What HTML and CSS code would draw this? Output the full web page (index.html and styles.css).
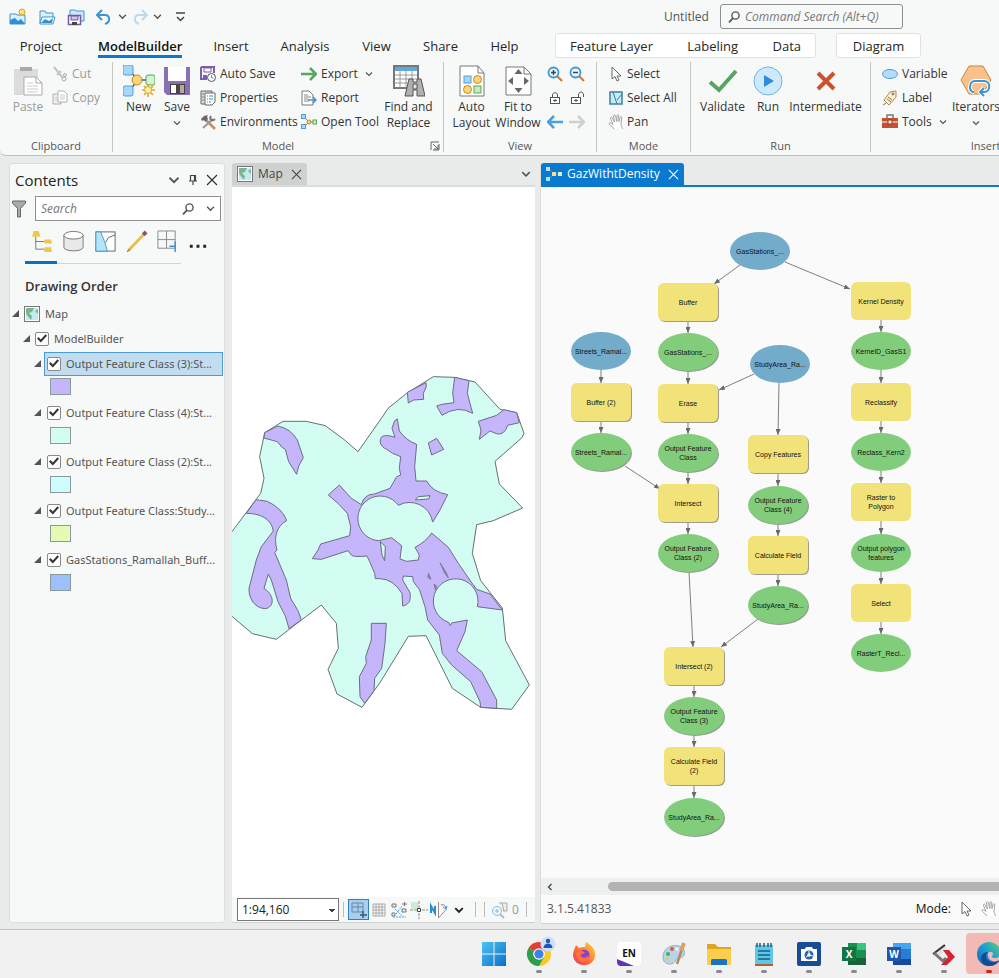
FILE: index.html
```html
<!DOCTYPE html>
<html lang="en">
<head>
  <meta charset="UTF-8">
  <meta name="viewport" content="width=device-width, initial-scale=1.0">
  <title>Untitled - ModelBuilder</title>
  <link rel="stylesheet" href="styles.css">
</head>
<body>

  <!-- shared icons -->
  <svg class="sprite" aria-hidden="true">
    <symbol id="chev" viewBox="0 0 8 8"><path d="M1 2.5l3 3 3-3" fill="none" stroke="#555" stroke-width="1.2"/></symbol>
    <symbol id="close" viewBox="0 0 12 12"><path d="M1 1l10 10M11 1L1 11" fill="none" stroke="currentColor" stroke-width="1.2"/></symbol>
    <symbol id="glass" viewBox="0 0 12 12"><circle cx="7.5" cy="4.5" r="3.6" fill="none" stroke="#555" stroke-width="1.4"/><path d="M5 7.2L1 11.3" stroke="#555" stroke-width="1.8"/></symbol>
    <symbol id="arrow" viewBox="0 0 16 16"><path d="M4 1v12l3-2.5L9 15l2-1-2-4h4z" fill="#fff" stroke="#666"/></symbol>
    <symbol id="hand" viewBox="0 0 16 16"><path d="M6 15C4 12 1 11 1 9.5 1 8.500 3 8.5 5 10.5L2.5 4.5C2 3 3.5 2.5 4.2 4L6.5 8 5.5 2C5.5.6 7.200.5 7.5 2L8.8 7.5 9 1.6C9.2.3 10.7.4 10.7 1.8L10.9 7.6 12.2 3.4C12.7 2.2 14 2.7 13.7 4L13 10C13 12 14 13 14.5 15" fill="#fff" stroke="#9a9a9a" stroke-width=".9"/></symbol>
    <symbol id="model" viewBox="0 0 16 16"><path d="M4 4l4 4-4 4M8 8h5" fill="none" stroke="#777"/><rect x=".5" y=".5" width="4" height="4" fill="#a6d8fb" stroke="#4e9fd8"/><rect x=".5" y="10.5" width="4" height="4" fill="#a6d8fb" stroke="#4e9fd8"/><circle cx="8" cy="8" r="2" fill="#fbd878" stroke="#b8892c"/><rect x="12" y="6" width="3.5" height="4" fill="#c9efc6" stroke="#5aa457"/></symbol>
    <symbol id="model-light" viewBox="0 0 16 16"><path d="M4 4l4 4-4 4M8 8h5" fill="none" stroke="#5b8fb8"/><rect x="0" y="1" width="4" height="4" fill="#b9e2fb"/><rect x="0" y="11" width="4" height="4" fill="#b9e2fb"/><rect x="6" y="6" width="4" height="4" fill="#fbdf8c"/><rect x="12" y="6" width="4" height="4" fill="#d9f2c4"/></symbol>
    <symbol id="mapicon" viewBox="0 0 16 16"><rect x=".5" y=".5" width="15" height="15" fill="#fff" stroke="#777"/><rect x="2" y="2" width="12" height="12" fill="#c5e9ef"/><path d="M2 2h8l-2 4-3 1 3 3-1 4-4-5-1-2zM14 3v5l-3-3z" fill="#7cb390"/></symbol>
  </svg>

  <header class="ribbon">
    <div class="title-row">
      <div class="quick">
        <button aria-label="New project"><svg viewBox="0 0 18 18"><path d="M1 6h6l1 1h8v9H1z" fill="#d9effc" stroke="#3f95d0"/><path d="M1 16v-4l5-2 3 3 3-2 4 5z" fill="#2e8fd3"/><circle cx="13" cy="4" r="3" fill="#fbe27a" stroke="#d6a82d"/></svg></button>
        <button aria-label="Open project"><svg viewBox="0 0 18 18"><path d="M2 16V3h5l1 2h7v4" fill="#d9effc" stroke="#3f95d0"/><path d="M2 16l2-7h13l-2 7z" fill="#fff" stroke="#3f95d0"/><path d="M3 15l4-4 4 2 4-3-1 5z" fill="#2e8fd3"/></svg></button>
        <button aria-label="Save project"><svg viewBox="0 0 18 18"><path d="M3 8V2h5l1 1h8v10h-3" fill="#cde8f8" stroke="#3f95d0"/><rect x="1.5" y="7.5" width="12" height="9" fill="#fff" stroke="#77579f" stroke-width="1.5"/><path d="M4 8h7v4H4z" fill="#cfc4df" stroke="#77579f"/><path d="M5 14h5v3H5z" fill="#444"/></svg></button>
        <button aria-label="Undo"><svg viewBox="0 0 18 18"><path d="M6 2L1 7l5 5M1 7h8c5 0 6 7 0 9" fill="none" stroke="#3c93d4" stroke-width="2"/></svg></button>
        <button class="tiny" aria-label="Undo list"><svg viewBox="0 0 8 8"><use href="#chev"/></svg></button>
        <button aria-label="Redo"><svg viewBox="0 0 18 18"><path d="M11 2l5 5-5 5M16 7H8c-5 0-6 7 0 9" fill="none" stroke="#c0d9ea" stroke-width="2"/></svg></button>
        <button class="tiny" aria-label="Redo list"><svg viewBox="0 0 8 8"><use href="#chev"/></svg></button>
        <button class="custom" aria-label="Customize"><svg viewBox="0 0 18 18"><path d="M4 5h9M5 9l3.5 3.5L12 9" fill="none" stroke="#444" stroke-width="1.5"/></svg></button>
      </div>
      <span class="doc-name">Untitled</span>
      <label class="command"><svg viewBox="0 0 12 12"><use href="#glass"/></svg><input type="text" placeholder="Command Search (Alt+Q)" aria-label="Command Search"></label>
    </div>

    <nav class="tabs">
      <button class="tab project">Project</button>
      <button class="tab builder active">ModelBuilder</button>
      <button class="tab insert">Insert</button>
      <button class="tab analysis">Analysis</button>
      <button class="tab view-menu">View</button>
      <button class="tab share">Share</button>
      <button class="tab help">Help</button>
      <div class="context layer-tabs">
        <button class="tab">Feature Layer</button>
        <button class="tab">Labeling</button>
        <button class="tab">Data</button>
      </div>
      <div class="context diagram-tab">
        <button class="tab">Diagram</button>
      </div>
    </nav>

    <div class="groups">
      <section class="group clipboard">
        <div class="tools">
          <button class="big paste" disabled><svg viewBox="0 0 32 32"><path d="M2 4h24v26H2z" fill="#dcdcdc"/><path d="M8 2h12v4H8z" fill="#aaa"/><path d="M12 12h12l6 6v12H12z" fill="#fff" stroke="#aaa"/><path d="M24 12v6h6" fill="none" stroke="#aaa"/><path d="M15 18h6M15 21h11M15 24h11M15 27h11" stroke="#ccc"/></svg>Paste</button>
          <div class="stack">
            <button class="small" disabled><svg viewBox="0 0 16 16"><path d="M2 1l9 11M9 5L5 9" stroke="#c4c4c4" stroke-width="2"/><circle cx="12" cy="13" r="2" fill="none" stroke="#aaa"/><circle cx="13" cy="9" r="1.5" fill="none" stroke="#aaa"/></svg>Cut</button>
            <button class="small" disabled><svg viewBox="0 0 16 16"><path d="M1 4h8v10H1z" fill="#eee" stroke="#b0b0b0"/><path d="M6 1h6l3 3v8H6z" fill="#fff" stroke="#b0b0b0"/><path d="M8 5h5M8 7h5M8 9h5M3 8h2M3 10h2" stroke="#ccc"/></svg>Copy</button>
          </div>
        </div>
        <h2>Clipboard</h2>
      </section>

      <section class="group model-group">
        <div class="tools">
          <button class="big new"><svg viewBox="0 0 32 32"><path d="M6 5l9 10-9 11M15 15h12" fill="none" stroke="#555" stroke-width="1.5"/><rect x="0" y="0" width="10" height="10" rx="2" fill="#a6d6fa" stroke="#4d9fdb"/><rect x="0" y="21" width="10" height="10" rx="2" fill="#a6d6fa" stroke="#4d9fdb"/><circle cx="14" cy="15" r="5" fill="#fbd577" stroke="#b98b2b"/><rect x="23" y="10" width="9" height="10" rx="2" fill="#d3f3d1" stroke="#5aa457"/><path d="M25 19v13M19 25h13M21 21l9 9M30 21l-9 9" stroke="#d9a72c" stroke-width="1.5"/><circle cx="25" cy="25" r="3.5" fill="#fff0a0" stroke="#d9a72c"/></svg>New</button>
          <button class="big save"><svg viewBox="0 0 32 32"><path d="M3 2h26v28H6l-3-3z" fill="#8a6fb3"/><path d="M7 2h18v14H7z" fill="#fff"/><path d="M9 19h15v10H9z" fill="#444"/><path d="M10 20h5v8h-5z" fill="#fff"/><path d="M19 20h4v8h-4z" fill="#b5aa98"/></svg>Save<svg class="drop" viewBox="0 0 8 8"><use href="#chev"/></svg></button>
          <div class="stack saves">
            <button class="small"><svg viewBox="0 0 16 16"><path d="M1 1h13v6M1 1v12h6" fill="none" stroke="#7d5fa8" stroke-width="2"/><path d="M4 2h7v4H4z" fill="#fff" stroke="#7d5fa8"/><path d="M3 9h4v4H3z" fill="#7d5fa8"/><circle cx="11.5" cy="11.5" r="4" fill="#fff" stroke="#555"/><path d="M11.5 9v3h2" fill="none" stroke="#4a9bd8"/></svg>Auto Save</button>
            <button class="small"><svg viewBox="0 0 16 16"><path d="M1 1h11v13H1z" fill="#ddd" stroke="#666"/><path d="M5 3h10v9l-3 3H5z" fill="#fff" stroke="#666"/><path d="M7 6h1M9 6h4M7 9h1M9 9h4M7 12h1M9 12h2M2 4h2M2 7h2M2 10h2" stroke="#3f8ec6"/></svg>Properties</button>
            <button class="small"><svg viewBox="0 0 16 16"><path d="M6 6l9 9" stroke="#d08b54" stroke-width="2.5"/><path d="M1 5l3-3 4-1-1 2 1 2-3 3-1-2-2 1z" fill="#666"/><path d="M3 14L13 5" stroke="#999" stroke-width="2"/><path d="M11 2c-2 3 1 6 4 3" fill="none" stroke="#777" stroke-width="2"/></svg>Environments</button>
          </div>
          <div class="stack exports">
            <button class="small"><svg viewBox="0 0 16 16"><path d="M0 8h14M9 2l6 6-6 6" fill="none" stroke="#57a565" stroke-width="2.6"/></svg>Export<svg class="side-drop" viewBox="0 0 8 8"><use href="#chev"/></svg></button>
            <button class="small"><svg viewBox="0 0 16 16"><path d="M1 1h7l4 4v10H1z" fill="#fff" stroke="#777"/><path d="M3 5h4M3 7h7M3 9h4M3 11h5" stroke="#888"/><path d="M7 10h8M12 7l3 3-3 3" fill="none" stroke="#3f94d3" stroke-width="1.5"/></svg>Report</button>
            <button class="small"><svg viewBox="0 0 16 16"><use href="#model"/></svg>Open Tool</button>
          </div>
          <button class="big find"><svg viewBox="0 0 32 32"><path d="M1 1h24v22H1z" fill="#fff" stroke="#777" stroke-width="2"/><path d="M2 2h22v4H2z" fill="#5fa9dd"/><path d="M2 10h22M2 14h22M2 18h22M7 6v17M13 6v17M19 6v17" stroke="#999"/><path d="M16 14h4v3h4v-3h4l4 17h-8v-6h-4v6h-8z" fill="#b0b0b0" stroke="#555"/><path d="M20 19h4v5h-4z" fill="#e4e4e4" stroke="#555"/></svg>Find and<br>Replace</button>
        </div>
        <h2>Model</h2>
        <button class="launcher" aria-label="Model options"><svg viewBox="0 0 10 10"><path d="M1 9V1h8M3 3l5 5M8 4v4H4M9 3v6H3" fill="none" stroke="#666"/></svg></button>
      </section>

      <section class="group view-group">
        <div class="tools">
          <button class="big auto"><svg viewBox="0 0 32 32"><path d="M4 1h18l6 7v23H4z" fill="#fff" stroke="#777"/><path d="M22 1v7h6" fill="none" stroke="#777"/><rect x="8" y="11" width="7" height="7" fill="#a6d6fa" stroke="#4d9fdb"/><circle cx="21.5" cy="14.5" r="4" fill="#fbd577" stroke="#b98b2b"/><circle cx="11.5" cy="24.5" r="4" fill="#fbd577" stroke="#b98b2b"/><rect x="18" y="21" width="7" height="7" fill="#c3ecc0" stroke="#5aa457"/></svg>Auto<br>Layout</button>
          <button class="big fit"><svg viewBox="0 0 32 32"><path d="M4 2h18l7 7v21H4z" fill="#fff" stroke="#777"/><path d="M22 2v7h7" fill="none" stroke="#777"/><path d="M16.5 4l4 5h-8zM16.5 28l4-5h-8zM6 16l5-4v8zM27 16l-5-4v8z" fill="#666"/></svg>Fit to<br>Window</button>
          <div class="nav-grid">
            <button aria-label="Zoom in"><svg viewBox="0 0 16 16"><path d="M10 10l5 5" stroke="#c9803f" stroke-width="2.2"/><circle cx="6.5" cy="6.5" r="5" fill="#eaf6fd" stroke="#4196d5" stroke-width="1.8"/><path d="M4 6.5h5M6.5 4v5" stroke="#444" stroke-width="1.5"/></svg></button>
            <button aria-label="Zoom out"><svg viewBox="0 0 16 16"><path d="M10 10l5 5" stroke="#c9803f" stroke-width="2.2"/><circle cx="6.5" cy="6.5" r="5" fill="#eaf6fd" stroke="#4196d5" stroke-width="1.8"/><path d="M4 6.5h5" stroke="#444" stroke-width="1.5"/></svg></button>
            <button aria-label="Lock"><svg viewBox="0 0 16 16"><rect x="3.5" y="7.5" width="9" height="6" fill="#fff" stroke="#555"/><path d="M5.5 7V5c0-3 5-3 5 0v2M8 9v3M6 10.5h4" fill="none" stroke="#555"/></svg></button>
            <button aria-label="Unlock"><svg viewBox="0 0 16 16"><rect x="2.5" y="7.5" width="9" height="6" fill="#fff" stroke="#555"/><path d="M9.5 7V5c0-4 5-4 5 0v2M7 9v3M5 10.5h4" fill="none" stroke="#555"/></svg></button>
            <button aria-label="Back"><svg viewBox="0 0 16 16"><path d="M16 8H2M7 2L1 8l6 6" fill="none" stroke="#4a9fdc" stroke-width="2.6"/></svg></button>
            <button aria-label="Forward"><svg viewBox="0 0 16 16"><path d="M0 8h14M9 2l6 6-6 6" fill="none" stroke="#cfcfcf" stroke-width="2.6"/></svg></button>
          </div>
        </div>
        <h2>View</h2>
      </section>

      <section class="group mode-group">
        <div class="tools">
          <div class="stack">
            <button class="small"><svg viewBox="0 0 16 16"><use href="#arrow"/></svg>Select</button>
            <button class="small"><svg viewBox="0 0 16 16"><rect x="2" y="2" width="12" height="12" fill="#c5ecf6" stroke="#3e7f9e" stroke-width="1.5"/><path d="M5 2l4 12M9 10l5-6" fill="none" stroke="#3e7f9e"/></svg>Select All</button>
            <button class="small"><svg viewBox="0 0 16 16"><use href="#hand"/></svg>Pan</button>
          </div>
        </div>
        <h2>Mode</h2>
      </section>

      <section class="group run-group">
        <div class="tools">
          <button class="big validate"><svg viewBox="0 0 32 32"><path d="M3 17l9 8L29 6" fill="none" stroke="#57a565" stroke-width="4"/></svg>Validate</button>
          <button class="big run"><svg viewBox="0 0 32 32"><circle cx="16" cy="16" r="14" fill="#cfe9fc" stroke="#6db3e6"/><path d="M12 10l10 6-10 6z" fill="#2f8cd6"/></svg>Run</button>
          <button class="big inter"><svg viewBox="0 0 32 32"><path d="M8 8l16 16M24 8L8 24" stroke="#c9532f" stroke-width="4"/></svg>Intermediate</button>
        </div>
        <h2>Run</h2>
      </section>

      <section class="group insert-group">
        <div class="tools">
          <div class="stack">
            <button class="small"><svg viewBox="0 0 16 16"><ellipse cx="8" cy="8" rx="7.5" ry="4.5" fill="#b5dcf9" stroke="#4d9fdb"/></svg>Variable</button>
            <button class="small"><svg viewBox="0 0 16 16"><path d="M2 10L8 2l6-1v6l-7 8z" fill="#fdf0d0" stroke="#b58a4c"/><circle cx="11" cy="4" r="1" fill="#fff" stroke="#666"/><path d="M5 9l4 3M6 7l4 3M1 15l3-2" stroke="#777"/></svg>Label</button>
            <button class="small"><svg viewBox="0 0 16 16"><path d="M5 4V1h6v3" fill="none" stroke="#777" stroke-width="1.5"/><path d="M0 4h16v10H0z" fill="#c6502f"/><path d="M0 8h16" stroke="#fff"/><path d="M6 6h4v4H6z" fill="#eee" stroke="#8a3a22"/></svg>Tools<svg class="side-drop" viewBox="0 0 8 8"><use href="#chev"/></svg></button>
          </div>
          <button class="big iter"><svg viewBox="0 0 32 32"><path d="M9 1h14l8 14-8 14H9L1 15z" fill="#fac28a" stroke="#c9853f"/><path d="M14 27c-6 0-5-11 1-11h9c7 0 7 11 0 11h-3M24 23l-4 4 4 4" fill="none" stroke="#fff" stroke-width="4"/><path d="M14 27c-6 0-5-11 1-11h9c7 0 7 11 0 11h-3M24 23l-4 4 4 4" fill="none" stroke="#3a92d8" stroke-width="2"/></svg>Iterators<svg class="drop" viewBox="0 0 8 8"><use href="#chev"/></svg></button>
        </div>
        <h2>Insert</h2>
      </section>
    </div>
  </header>

  <main class="workspace">
    <aside class="contents">
      <div class="pane-head">
        <h1>Contents</h1>
        <button aria-label="Menu"><svg viewBox="0 0 8 8"><use href="#chev"/></svg></button>
        <button aria-label="Pin"><svg viewBox="0 0 12 12"><path d="M3.5 7V1.5h5V7M2 7h8M6 7v4M7.5 2v5" fill="none" stroke="#444" stroke-width="1.2"/></svg></button>
        <button aria-label="Close"><svg viewBox="0 0 12 12"><use href="#close"/></svg></button>
      </div>
      <div class="search-row">
        <svg viewBox="0 0 14 18"><path d="M.5 1h13v2L8.5 8.5V17h-3V8.5L.5 3z" fill="#aaa" stroke="#666"/></svg>
        <label class="search"><input type="text" placeholder="Search" aria-label="Search contents"><svg viewBox="0 0 12 12"><use href="#glass"/></svg><svg class="chev" viewBox="0 0 8 8"><use href="#chev"/></svg></label>
      </div>
      <div class="list-tabs">
        <button class="active" aria-label="List by drawing order"><svg viewBox="0 0 24 24"><path d="M6 7v13h9M6 12h9" fill="none" stroke="#777"/><path d="M4 1h5l2 6H2zM15 10h7l1 4h-8zM15 18h7l1 5h-8z" fill="#ecc94b"/></svg></button>
        <button aria-label="List by source"><svg viewBox="0 0 24 24"><path d="M2 5v13c0 5 20 5 20 0V5" fill="#e9e9e9" stroke="#777"/><ellipse cx="12" cy="5.5" rx="10" ry="4" fill="#fff" stroke="#777"/></svg></button>
        <button aria-label="List by selection"><svg viewBox="0 0 24 24"><rect x="2" y="2" width="20" height="20" fill="#fff" stroke="#666"/><path d="M2 2h5l4 10 3 10H2z" fill="#b4e5f7" stroke="#4a9cc4"/><path d="M12 13l3-5 7-3" fill="none" stroke="#666"/></svg></button>
        <button aria-label="List by editing"><svg viewBox="0 0 24 24"><path d="M2 22L20 3" stroke="#e5be4c" stroke-width="3"/><path d="M18 5l3-3" stroke="#8d5555" stroke-width="4"/><path d="M1 23l3-3" stroke="#8a6a2a"/></svg></button>
        <button class="snap" aria-label="List by snapping"><svg viewBox="0 0 24 24"><path d="M2 1h18v18H2zM11 1v18M2 10h18" fill="none" stroke="#888"/><path d="M14 17h6M20 12v11" stroke="#3a92d0" stroke-width="1.5"/></svg></button>
        <button class="more" aria-label="More"><svg viewBox="0 0 24 24"><path d="M4 17h3M11 17h3M18 17h3" stroke="#222" stroke-width="3"/></svg></button>
      </div>
      <h3>Drawing Order</h3>
      <ul class="tree">
        <li class="row map-row"><i></i><svg viewBox="0 0 16 16"><use href="#mapicon"/></svg>Map</li>
        <li class="row group-row"><i></i><label><input type="checkbox" checked>ModelBuilder</label></li>
        <li class="row layer selected"><i></i><label><input type="checkbox" checked>Output Feature Class (3):St...</label></li>
        <li class="swatch violet"></li>
        <li class="row layer"><i></i><label><input type="checkbox" checked>Output Feature Class (4):St...</label></li>
        <li class="swatch mint"></li>
        <li class="row layer"><i></i><label><input type="checkbox" checked>Output Feature Class (2):St...</label></li>
        <li class="swatch aqua"></li>
        <li class="row layer"><i></i><label><input type="checkbox" checked>Output Feature Class:Study...</label></li>
        <li class="swatch lime"></li>
        <li class="row layer"><i></i><label><input type="checkbox" checked>GasStations_Ramallah_Buff...</label></li>
        <li class="swatch blue"></li>
      </ul>
    </aside>

    <section class="view map-view">
      <div class="view-tabs">
        <button class="view-tab"><svg viewBox="0 0 16 16"><use href="#mapicon"/></svg>Map<svg class="x" viewBox="0 0 12 12"><use href="#close"/></svg></button>
        <button class="view-list" aria-label="View list"><svg viewBox="0 0 8 8"><use href="#chev"/></svg></button>
      </div>
      <svg class="map" viewBox="12 -519 909 2127" preserveAspectRatio="xMidYMin" role="img" aria-label="Study area map">
        <path class="area" d="M0 531L12 515L98 400L108 355L95 290L110 218L165 184L235 184L292 197L350 240L390 275L465 168L480 145L536 100L616 50L678 52L741 66L816 148L866 158L888 220L882 233L801 304L814 372L884 444L796 482L746 494L733 580L758 662L823 744L833 842L904 975L851 1048L758 1042L673 985L594 827L541 829L456 968L402 1042L327 1002L300 928L331 865L325 790L280 735L220 780L145 838L73 821L12 769L0 758z"/>
        <path class="zone" d="M110 218L150 198Q188 206 208 240L226 293L212 318L206 343L182 305L172 268L162 262L148 245L108 234z"/>
        <path class="zone" d="M55 460L84 419L118 424Q164 446 176 482C146 498 136 530 147 570L140 577L175 660L188 715L210 752L220 780L183 806L172 768L150 725L130 660L121 642L108 685C140 705 140 742 112 746C80 745 62 715 63 685L85 600L100 560L136 513C130 475 95 460 55 460z"/>
        <path class="zone" d="M301 405L334 375L370 415L400 434Q408 402 440 402L456 396L486 385L506 350L518 345L514 325L518 290L494 280L476 268C450 258 452 228 470 227L484 227L501 232L492 205L500 182L508 177L514 213Q535 242 566 253L560 320L564 363L596 363Q612 395 659 404L636 450L614 486A70 70 0 0 0 511 436A67 67 0 1 0 452 542L491 533L521 557L516 597L536 604L571 600L574 585L561 562Q594 545 611 519L661 562L691 610L731 668L746 688L786 702L823 750L748 740A67 67 0 1 0 662 787L667 797L671 789L718 780L711 815L686 872L761 935L806 1020L806 1045L758 1042L756 1025L728 965L671 915L643 880L634 825L599 780L591 740L574 688L556 665L554 650L526 648L524 660L546 698C550 725 540 735 524 738L522 700Q495 657 456 656L442 656L440 640L425 605L417 588Q376 592 370 585L360 572L280 598L253 596L270 570L278 552L365 527L368 500L358 460L330 430z"/>
        <path class="zone" d="M538 97L594 68L595 80L586 100L587 118L557 120L541 129z"/>
        <path class="zone" d="M680 52L723 62L718 100L734 160Q690 134 642 166L626 138L641 133L678 128L674 100z"/>
        <path class="zone" d="M751 184L806 166L828 149L866 158L874 188L839 196Q830 225 808 222L786 213L754 238L759 210z"/>
        <path class="zone" d="M601 249L626 235L647 268L611 285z"/>
        <path class="zone" d="M430 790L475 790L471 850L461 925L440 955L438 992L410 1030L396 1010L394 950L415 910L413 890L430 840z"/>
        <path class="area" d="M562 420L571 410L606 407L602 417zM457 545L472 560L470 602L462 585z"/>
        <path class="hole" d="M636 608L656 640L661 654L650 640zM599 652L602 640L609 658zM618 672L626 678L622 690z"/>
      </svg>
      <div class="status">
        <select aria-label="Map scale"><option>1:94,160</option></select>
        <span class="bar"></span>
        <button class="on" aria-label="Layout grid"><svg viewBox="0 0 18 18"><path d="M2 2h11v9H2zM2 6h11M8 2v9" fill="none" stroke="#6d8598"/><path d="M13 10v7M10 14h7" stroke="#456" stroke-width="1.5"/></svg></button>
        <button aria-label="Grid"><svg viewBox="0 0 18 18"><path d="M3 3h12v12H3zM3 6h12M3 9h12M3 12h12M6 3v12M9 3v12M12 3v12" fill="none" stroke="#aaa"/></svg></button>
        <button aria-label="Snapping"><svg viewBox="0 0 18 18"><path d="M2 3h4v3H2zM12 8h4v3h-4zM2 12h3v3H2z" fill="#eee" stroke="#777"/><path d="M6 13l6-8M5 8l7 7M3 16h13" stroke="#4a9cd8" stroke-dasharray="2 1"/><path d="M12 3h5M14.5 1v4" stroke="#777"/></svg></button>
        <button aria-label="Dynamic constraints"><svg viewBox="0 0 18 18"><path d="M1 1h7v7H1z" fill="#cdebd0"/><path d="M0 9h18M9 0v18" stroke="#888" stroke-dasharray="3 1"/><path d="M7.5 7.5h3v3h-3z" fill="#fff" stroke="#444"/></svg></button>
        <button aria-label="North up"><svg viewBox="0 0 18 18"><path d="M1 12V5l4 7V5" fill="none" stroke="#2d8dd2" stroke-width="2"/><path d="M8.5 1v16l8-9" fill="none" stroke="#a88"/><path d="M11 4c3-1 5 1 5 4M13 6l3 2 1-3" fill="none" stroke="#3a92d8"/></svg></button>
        <button class="more" aria-label="More"><svg viewBox="0 0 8 8"><path d="M1 2.5l3 3 3-3" fill="none" stroke="#222" stroke-width="1.6"/></svg></button>
        <span class="bar double"></span>
        <svg class="selected-icon" viewBox="0 0 18 18"><path d="M8 2h8v8h-4M11 2l2 8" fill="#eee" stroke="#aaa"/><circle cx="6" cy="10" r="4.5" fill="#eef7fc" stroke="#8abbe0"/><path d="M4 10h4M6 8v4" stroke="#8abbe0"/><path d="M9 13l4 4" stroke="#bbb" stroke-width="2"/></svg>
        <span class="count">0</span>
        <span class="bar"></span>
      </div>
    </section>

    <section class="view model-view">
      <div class="view-tabs">
        <button class="view-tab"><svg viewBox="0 0 16 16"><use href="#model-light"/></svg>GazWithtDensity<svg class="x" viewBox="0 0 12 12"><use href="#close"/></svg></button>
      </div>
      <svg class="diagram" role="img" aria-label="Model diagram">
        <defs>
          <marker id="tip" viewBox="0 0 6 5" refX="6" refY="2.5" markerWidth="6" markerHeight="5" orient="auto"><path d="M0 0l6 2.5-6 2.5z" fill="#6a6a6a"/></marker>
          <g id="tool"><rect x="-30" y="-19" width="60" height="38" rx="6" fill="#f2e27a"/></g>
          <g id="tool-run"><rect x="-29" y="-18" width="60" height="38" rx="6" fill="#a29c86"/><rect x="-30" y="-19" width="60" height="38" rx="6" fill="#f2e27a"/></g>
          <g id="out"><ellipse rx="30" ry="19" fill="#82cd7c"/></g>
          <g id="out-run"><ellipse cx="1" cy="1" rx="30" ry="19" fill="#8e9f8c"/><ellipse rx="30" ry="19" fill="#82cd7c"/></g>
          <g id="in"><ellipse rx="30" ry="19" fill="#73acca"/></g>
        </defs>

        <g class="links">
          <path d="M199 78L173 97"/>
          <path d="M244 75L309 102"/>
          <path d="M60 183v13"/><path d="M60 234v12"/><path d="M84 279l35 23"/>
          <path d="M147 134v12"/><path d="M147 184v13"/><path d="M147 235v12"/><path d="M147 285v12"/><path d="M147 335v12"/>
          <path d="M213 187l-35 16"/><path d="M238 196l-1 52"/>
          <path d="M237 286v13"/><path d="M237 337v12"/><path d="M237 387v12"/>
          <path d="M148 385l4 75"/><path d="M217 432l-37 28"/>
          <path d="M153 498v12"/><path d="M153 548v12"/><path d="M153 598v13"/>
          <path d="M340 133v12"/><path d="M340 183v13"/><path d="M340 234v12"/><path d="M340 284v12"/><path d="M340 334v13"/><path d="M340 385v12"/><path d="M340 435v12"/>
        </g>

        <g class="nodes">
          <g transform="translate(219 64)"><use href="#in"/><text y="3">GasStations_...</text></g>
          <g transform="translate(147 115)"><use href="#tool-run"/><text y="3">Buffer</text></g>
          <g transform="translate(147 165)"><use href="#out-run"/><text y="3">GasStations_...</text></g>
          <g transform="translate(147 216)"><use href="#tool-run"/><text y="3">Erase</text></g>
          <g transform="translate(147 266)"><use href="#out-run"/><text y="-2">Output Feature<tspan x="0" dy="9">Class</tspan></text></g>
          <g transform="translate(147 316)"><use href="#tool-run"/><text y="3">Intersect</text></g>
          <g transform="translate(147 366)"><use href="#out-run"/><text y="-2">Output Feature<tspan x="0" dy="9">Class (2)</tspan></text></g>

          <g transform="translate(60 164)"><use href="#in"/><text y="3">Streets_Ramal...</text></g>
          <g transform="translate(60 215)"><use href="#tool-run"/><text y="3">Buffer (2)</text></g>
          <g transform="translate(60 265)"><use href="#out-run"/><text y="3">Streets_Ramal...</text></g>

          <g transform="translate(239 177)"><use href="#in"/><text y="3">StudyArea_Ra...</text></g>
          <g transform="translate(237 267)"><use href="#tool-run"/><text y="3">Copy Features</text></g>
          <g transform="translate(237 318)"><use href="#out-run"/><text y="-2">Output Feature<tspan x="0" dy="9">Class (4)</tspan></text></g>
          <g transform="translate(237 368)"><use href="#tool-run"/><text y="3">Calculate Field</text></g>
          <g transform="translate(237 418)"><use href="#out-run"/><text y="3">StudyArea_Ra...</text></g>

          <g transform="translate(153 479)"><use href="#tool-run"/><text y="3">Intersect (2)</text></g>
          <g transform="translate(153 529)"><use href="#out-run"/><text y="-2">Output Feature<tspan x="0" dy="9">Class (3)</tspan></text></g>
          <g transform="translate(153 579)"><use href="#tool-run"/><text y="-2">Calculate Field<tspan x="0" dy="9">(2)</tspan></text></g>
          <g transform="translate(153 630)"><use href="#out-run"/><text y="3">StudyArea_Ra...</text></g>

          <g transform="translate(340 114)"><use href="#tool"/><text y="3">Kernel Density</text></g>
          <g transform="translate(340 164)"><use href="#out"/><text y="3">KernelD_GasS1</text></g>
          <g transform="translate(340 215)"><use href="#tool"/><text y="3">Reclassify</text></g>
          <g transform="translate(340 265)"><use href="#out"/><text y="3">Reclass_Kern2</text></g>
          <g transform="translate(340 315)"><use href="#tool"/><text y="-2">Raster to<tspan x="0" dy="9">Polygon</tspan></text></g>
          <g transform="translate(340 366)"><use href="#out"/><text y="-2">Output polygon<tspan x="0" dy="9">features</tspan></text></g>
          <g transform="translate(340 416)"><use href="#tool"/><text y="3">Select</text></g>
          <g transform="translate(340 466)"><use href="#out"/><text y="3">RasterT_Recl...</text></g>
        </g>
      </svg>
      <div class="scroll"><svg viewBox="0 0 8 8"><path d="M5.5 1l-3 3 3 3" fill="none" stroke="#444" stroke-width="1.3"/></svg><span></span></div>
      <div class="model-status">
        <span class="version">3.1.5.41833</span>
        <span class="mode">Mode:</span>
        <button aria-label="Select mode"><svg viewBox="0 0 16 16"><use href="#arrow"/></svg></button>
        <button aria-label="Pan mode"><svg viewBox="0 0 16 16"><use href="#hand"/></svg></button>
      </div>
    </section>
  </main>

  <footer class="taskbar">
    <button class="start" aria-label="Start"><svg viewBox="0 0 24 24"><defs><linearGradient id="win" x1="0" y1="0" x2="1" y2="1"><stop offset="0" stop-color="#4cc4f2"/><stop offset="1" stop-color="#0a6ecb"/></linearGradient></defs><path d="M0 0h11.5v11.5H0zM12.5 0H24v11.5H12.5zM0 12.5h11.5V24H0zM12.5 12.5H24V24H12.5z" fill="url(#win)"/></svg></button>
    <button class="chrome" aria-label="Chrome"><svg viewBox="0 0 24 24"><circle cx="12" cy="12" r="12" fill="#f8c92b"/><path d="M12 12L1.6 6A12 12 0 0 1 22.400 6z" fill="#dc4334"/><path d="M12 12L1.6 6A12 12 0 0 0 12 24l5-9z" fill="#2d9d52"/><circle cx="12" cy="12" r="5.8" fill="#fff"/><circle cx="12" cy="12" r="4.6" fill="#3f7fe8"/><circle cx="21" cy="2" r="7.500" fill="#cfe0fa"/><circle cx="21" cy="-1" r="2.200" fill="#1b57b5"/><path d="M16.5 6c0-6 9-6 9 0z" fill="#1b57b5"/></svg></button>
    <button aria-label="Firefox"><svg viewBox="0 0 24 24"><defs><linearGradient id="fox" x1="1" y1="0" x2="0" y2="1"><stop offset="0" stop-color="#ffdf3d"/><stop offset=".5" stop-color="#ff7b2d"/><stop offset="1" stop-color="#ea2f6c"/></linearGradient></defs><path d="M1 13C1 9 3 6 4 3l3 3c2-1 4-1 6-1l1-5c5 3 10 7 9 14-2 13-21 12-22-1z" fill="url(#fox)"/><circle cx="12" cy="13" r="5.5" fill="#8a3fd0"/><path d="M5 9c4-3 5 1 8 1-1 3-5 1-4 4 2 3 6 2 7-1 2 4-2 8-6 7-4-1-7-6-5-11z" fill="#ff7139"/></svg></button>
    <button class="en" aria-label="EndNote"><svg viewBox="0 0 24 24"><rect width="24" height="24" rx="4" fill="#fff"/><path d="M0 17l17 7H4c-3 0-4-2-4-4z" fill="#5b36b5"/><text x="12" y="15">EN</text></svg></button>
    <button aria-label="Paint"><svg viewBox="0 0 24 24"><path d="M1 15C1 6 10 2 17 4c8 3 7 12 0 12-4 0-3 6-9 6-5 0-7-3-7-7z" fill="#b7d5e9" stroke="#8fb2ca"/><circle cx="6" cy="12" r="2" fill="#4cae5b"/><circle cx="10" cy="7" r="2" fill="#e25643"/><circle cx="5" cy="17" r="1.5" fill="#f0c541"/><circle cx="15" cy="7" r="1.5" fill="#fff"/><path d="M15 22L20 7" stroke="#b78a5c" stroke-width="2.5"/><path d="M19 9l3-8" stroke="#d8a06c" stroke-width="4"/></svg></button>
    <button aria-label="File Explorer"><svg viewBox="0 0 24 24"><path d="M0 2h8l3 3h13v7H0z" fill="#dfa522"/><path d="M0 7h24v16H0z" fill="#fbcd4a"/><path d="M4 23v-4c0-2 1-2 2-2h12c2 0 2 1 2 2v4z" fill="#1a73c4"/></svg></button>
    <button aria-label="Notepad"><svg viewBox="0 0 24 24"><path d="M3 3h18v19H3z" fill="#5cc7e6"/><path d="M6 9h12M6 13h12M6 17h12" stroke="#155e80" stroke-width="1.5"/><path d="M5 1v4M8 1v4M12 1v4M16 1v4M19 1v4" stroke="#1d5f7c" stroke-width="1.5"/><path d="M3 23h18" stroke="#b6612b" stroke-width="2"/></svg></button>
    <button aria-label="Screen capture"><svg viewBox="0 0 24 24"><rect width="24" height="24" rx="2" fill="#164d94"/><path d="M4 7h4l1-2h6l1 2h4v12H4z" fill="#fff"/><circle cx="12" cy="13" r="4.5" fill="#2664aa"/><path d="M12 9v4l-3 2M12 13l4 1" stroke="#fff" fill="none"/><circle cx="12" cy="13" r="1.8" fill="#fff"/></svg></button>
    <button class="office" aria-label="Excel"><svg viewBox="0 0 24 24"><path d="M6 1h18v22H6z" fill="#1b8f52"/><path d="M15 1h9v7h-9z" fill="#36c481"/><path d="M6 16h18v7H6z" fill="#17623a"/><path d="M0 5h14v14H0z" fill="#117644"/><text x="7" y="16">X</text></svg></button>
    <button class="office" aria-label="Word"><svg viewBox="0 0 24 24"><path d="M6 1h18v22H6z" fill="#2b7cd3"/><path d="M6 1h18v6H6z" fill="#46a5ee"/><path d="M6 17h18v6H6z" fill="#164a9c"/><path d="M0 5h14v14H0z" fill="#1d57ae"/><text x="7" y="16">W</text></svg></button>
    <button aria-label="Viewer"><svg viewBox="0 0 24 24"><path d="M2 11l9-9 4 5-7 6z" fill="#e2e2e2"/><path d="M1 12L13 3" stroke="#333" stroke-width="2"/><path d="M2 11l9 8 3-3" fill="none" stroke="#777" stroke-width="3"/><path d="M11 8h6l6 7-8 8h-6l7-8z" fill="#d32435"/></svg></button>
    <button class="edge" aria-label="Edge"><svg viewBox="0 0 24 24"><defs><linearGradient id="edg" x1="0" y1="1" x2="1" y2="0"><stop offset="0" stop-color="#0f5fb4"/><stop offset=".5" stop-color="#1f9ad8"/><stop offset="1" stop-color="#55d56a"/></linearGradient></defs><circle cx="12" cy="12" r="12" fill="url(#edg)"/><path d="M11 10c-4 4-1 10 5 10 3 0 5-1 7-3-3 7-11 9-17 5-4-6-1-12 5-12z" fill="#124c93"/><path d="M11 12c0-3 5-3 5 0 0 2-2 2-1 3 2 2 6 1 8-1l-1 4c-6 4-12-1-11-6z" fill="#f3b9b5"/></svg></button>
  </footer>

</body>
</html>
```

FILE: styles.css
```css
* {
  box-sizing: border-box;
  margin: 0;
  padding: 0;
}

body {
  min-height: 100vh;
  display: flex;
  flex-direction: column;
  background: #e9eaea;
  color: #333;
  font-family: "Open Sans", "Segoe UI", sans-serif;
  font-size: 12px;
  line-height: 16px;
  overflow: hidden;
}

button,
input,
select {
  font: inherit;
  color: inherit;
  border: none;
  background: none;
}

svg {
  display: block;
  flex: none;
}

.sprite {
  position: absolute;
  width: 0;
  height: 0;
}

/* ribbon */
.ribbon {
  height: 156px;
  flex: none;
  background: #f7f9f8;
  border-bottom: 1px solid #bdbfbf;
  border-bottom-left-radius: 6px;
  overflow: hidden;
}

.title-row {
  height: 33px;
  display: flex;
  align-items: center;
}

.quick {
  width: 664px;
  flex: none;
  display: flex;
  align-items: center;
  gap: 11px;
  padding-left: 9px;
}

.quick svg {
  width: 18px;
  height: 18px;
}

.quick .tiny {
  margin: 0 -7px;
}

.quick .tiny svg {
  width: 9px;
  height: 9px;
}

.quick .custom {
  margin-left: 6px;
}

.doc-name {
  width: 56px;
  flex: none;
  color: #555;
}

.command {
  width: 183px;
  height: 25px;
  flex: none;
  display: flex;
  align-items: center;
  gap: 5px;
  padding-left: 7px;
  border: 1px solid #8e8e8e;
  border-radius: 3px;
}

.command svg {
  width: 12px;
  height: 12px;
}

.command input {
  width: 150px;
  outline: none;
}

input::placeholder {
  font-style: italic;
  color: #777;
}

.tabs {
  height: 25px;
  display: flex;
  align-items: flex-start;
  padding-left: 4px;
}

.tab {
  height: 25px;
  font-size: 13px;
  line-height: 26px;
  color: #262626;
  text-align: center;
  white-space: nowrap;
  flex: none;
}

.project { width: 74px; }
.builder { width: 84px; margin: 0 16px 0 20px; }
.insert { width: 66px; }
.analysis { width: 82px; }
.view-menu { width: 61px; }
.share { width: 67px; }
.help { width: 61px; }

.tab.active {
  font-weight: 600;
  color: #111;
  border-bottom: 3px solid #0a78cf;
}

.context {
  height: 25px;
  display: flex;
  background: #fff;
  border: 1px solid #e0e2e2;
  border-radius: 3px;
  flex: none;
}

.layer-tabs {
  width: 261px;
  justify-content: space-between;
  padding: 0 14px;
  margin-left: 20px;
}

.diagram-tab {
  width: 85px;
  justify-content: center;
  margin-left: 20px;
}

.context .tab {
  height: 23px;
  line-height: 24px;
}

.groups {
  display: flex;
  padding-top: 4px;
}

.group {
  height: 90px;
  flex: none;
  position: relative;
  border-right: 1px solid #c4c6c6;
}

.clipboard { width: 113px; }
.model-group { width: 331px; }
.view-group { width: 153px; }
.mode-group { width: 94px; }
.run-group { width: 180px; }
.insert-group { width: 230px; }

.tools {
  height: 74px;
  display: flex;
}

.clipboard .tools { padding-left: 10px; gap: 6px; }
.model-group .tools { padding-left: 6px; }
.view-group .tools { padding-left: 6px; }
.mode-group .tools { padding-left: 11px; }
.run-group .tools { padding-left: 8px; }
.insert-group .tools { padding-left: 11px; }

.group h2 {
  font-size: 11px;
  font-weight: 400;
  line-height: 20px;
  color: #555;
  text-align: center;
}

.big {
  display: flex;
  flex-direction: column;
  align-items: center;
  padding-top: 3px;
  flex: none;
  white-space: nowrap;
}

.big svg {
  width: 32px;
  height: 32px;
  margin-bottom: 2px;
}

.big svg.drop {
  width: 8px;
  height: 8px;
  margin: 4px 0 0;
}

.paste { width: 36px; }
.new { width: 39px; }
.save { width: 38px; }
.find { width: 51px; }
.auto { width: 43px; }
.fit { width: 50px; }
.validate { width: 47px; }
.run { width: 44px; }
.inter { width: 71px; }
.iter { width: 52px; }

.stack {
  display: flex;
  flex-direction: column;
}

.saves { width: 101px; margin-left: 4px; }
.exports { width: 82px; }
.insert-group .stack { width: 68px; }

.small {
  height: 24px;
  display: flex;
  align-items: center;
  gap: 4px;
  white-space: nowrap;
}

.small svg {
  width: 16px;
  height: 16px;
}

.small svg.side-drop {
  width: 8px;
  height: 8px;
  margin-left: 3px;
}

.mode-group .small {
  gap: 3px;
}

button:disabled {
  color: #9a9a9a;
}

.nav-grid {
  display: grid;
  grid-template-columns: 22px 22px;
  grid-auto-rows: 24px;
  margin-left: 4px;
  align-items: center;
}

.nav-grid svg {
  width: 16px;
  height: 16px;
}

.launcher {
  position: absolute;
  right: 3px;
  bottom: 1px;
}

.launcher svg {
  width: 10px;
  height: 10px;
}

/* workspace */
.workspace {
  flex: 1;
  min-height: 0;
  display: flex;
  padding: 7px 0 6px 9px;
}

.contents {
  width: 216px;
  flex: none;
  margin-right: 7px;
  background: #f7f9f9;
  border: 1px solid #dcdede;
  border-radius: 3px;
}

.pane-head {
  height: 32px;
  display: flex;
  align-items: center;
  gap: 7px;
  padding: 0 6px 0 5px;
}

.pane-head h1 {
  flex: 1;
  font-size: 15px;
  font-weight: 400;
  color: #222;
}

.pane-head svg {
  width: 12px;
  height: 12px;
}

.search-row {
  display: flex;
  align-items: center;
  gap: 9px;
  padding: 0 3px 0 2px;
}

.search-row > svg {
  width: 14px;
  height: 18px;
}

.search {
  flex: 1;
  min-width: 0;
  height: 25px;
  display: flex;
  align-items: center;
  padding: 0 5px;
  border: 1px solid #8d8f8f;
  background: #fff;
}

.search input {
  flex: 1;
  min-width: 0;
  outline: none;
}

.search svg {
  width: 12px;
  height: 12px;
}

.search .chev {
  width: 9px;
  height: 9px;
  margin-left: 12px;
}

.list-tabs {
  height: 43px;
  display: flex;
  padding-left: 15px;
}

.list-tabs button {
  width: 32px;
  display: flex;
  justify-content: center;
  padding-top: 9px;
  border-bottom: 1px solid #d3d5d5;
}

.list-tabs .snap {
  width: 28px;
}

.list-tabs button.active {
  border-bottom: 3px solid #0a6fc0;
}

.list-tabs button.more {
  border: none;
}

.list-tabs svg {
  width: 23px;
  height: 23px;
}

.contents h3 {
  font-size: 13px;
  font-weight: 600;
  line-height: 20px;
  margin: 12px 0 5px 15px;
}

.tree {
  list-style: none;
  font-family: "Noto Sans", "Open Sans", sans-serif;
  font-size: 11px;
}

.row,
.row label {
  display: flex;
  align-items: center;
  white-space: nowrap;
}

.row {
  height: 25px;
  color: #555;
}

.row i {
  width: 7px;
  height: 7px;
  flex: none;
  background: #555;
  clip-path: polygon(100% 0, 100% 100%, 0 100%);
}

.row svg {
  width: 16px;
  height: 16px;
  margin: 0 5px;
}

.map-row { padding-left: 2px; }
.group-row { padding-left: 13px; }
.layer { padding: 0 1px 0 24px; }

.row label {
  height: 24px;
  gap: 5px;
  margin-left: 5px;
}

.layer label {
  flex: 1;
  margin-left: 3px;
  padding-left: 2px;
  border: 1px solid transparent;
}

.selected label {
  background: #c2dcf0;
  border-color: #4a9bd6;
}

.row input {
  appearance: none;
  width: 14px;
  height: 14px;
  flex: none;
  background: #fff;
  border: 1px solid #888;
  border-radius: 2px;
}

.row input:checked::before {
  content: "";
  display: block;
  width: 10px;
  height: 10px;
  margin: 1px;
  background: #333;
  clip-path: polygon(0 50%, 15% 35%, 38% 60%, 85% 8%, 100% 22%, 38% 90%);
}

.swatch {
  width: 21px;
  height: 17px;
  margin: 2px 0 5px 40px;
  border: 1px solid #8a9a9a;
}

.violet { background: #c5b5fb; }
.mint { background: #d3fdf2; }
.aqua { background: #cdfefd; }
.lime { background: #e5fbb4; }
.blue { background: #9cc0fb; }

/* document views */
.view {
  display: flex;
  flex-direction: column;
}

.map-view {
  width: 303px;
  flex: none;
  margin-right: 6px;
  background: #fff;
}

.model-view {
  flex: 1;
  min-width: 0;
  background: #fafafa;
  box-shadow: 0 1px #d0d2d2, -1px 0 #dcdede;
}

.view-tabs {
  height: 24px;
  flex: none;
  display: flex;
  justify-content: space-between;
  background: #e9eaea;
  border-bottom: 2px solid #dadcdc;
}

.view-tab {
  display: flex;
  align-items: center;
  gap: 5px;
  padding: 0 5px;
  background: #cfd1d1;
  color: #444;
  border-radius: 3px 3px 0 0;
}

.view-tab svg {
  width: 16px;
  height: 16px;
}

.view-tab .x {
  width: 11px;
  height: 11px;
  margin-left: 3px;
}

.view-list {
  padding-right: 4px;
}

.view-list svg {
  width: 10px;
  height: 10px;
}

.model-view .view-tabs {
  border-color: #0a7ad1;
}

.model-view .view-tab {
  background: #0a7ad1;
  color: #fff;
}

.map {
  flex: 1;
  min-height: 0;
  width: 100%;
}

.area {
  fill: #d3fdf2;
  stroke: #66706e;
  stroke-width: 3px;
}

.zone {
  fill: #c5b5fb;
  stroke: #6f6c84;
  stroke-width: 3px;
}

.hole {
  fill: #8f86b5;
  stroke: #6f6c84;
  stroke-width: 2px;
}

.status {
  height: 26px;
  flex: none;
  display: flex;
  align-items: center;
  padding-left: 5px;
  background: #f7f9f8;
  border-bottom: 1px solid #d0d2d2;
  overflow: hidden;
}

.status select {
  appearance: none;
  width: 102px;
  height: 23px;
  flex: none;
  padding-left: 4px;
  border: 1px solid #777;
  color: #222;
  background: linear-gradient(#444, #444) 91px 10px / 6px 1px no-repeat,
    linear-gradient(#444, #444) 92px 11px / 4px 1px no-repeat,
    linear-gradient(#444, #444) 93px 12px / 2px 1px no-repeat, #fff;
}

.bar {
  width: 1px;
  height: 15px;
  flex: none;
  margin: 0 4px;
  background: #bbb;
}

.bar.double {
  width: 10px;
  margin: 0 6px;
  background: none;
  border: 1px solid #bbb;
  border-width: 0 1px;
}

.status button {
  width: 20px;
  height: 21px;
  display: flex;
  align-items: center;
  justify-content: center;
}

.status .on {
  width: 21px;
  background: #a5d0f3;
  border: 1px solid #2f80bd;
}

.status svg {
  width: 18px;
  height: 18px;
}

.status .more svg {
  width: 10px;
  height: 10px;
}

.count {
  margin: 0 3px;
  color: #999;
}

.diagram {
  flex: 1;
  min-height: 0;
  width: 100%;
}

.links path {
  fill: none;
  stroke: #808080;
  stroke-width: 1px;
  marker-end: url(#tip);
}

.nodes text {
  font-family: "Liberation Sans", Arial, sans-serif;
  font-size: 7px;
  fill: #111;
  text-anchor: middle;
}

.scroll {
  height: 17px;
  flex: none;
  display: flex;
  align-items: center;
  background: #eeefef;
}

.scroll svg {
  width: 8px;
  height: 8px;
  margin: 0 54px 0 5px;
}

.scroll span {
  flex: 1;
  height: 9px;
  background: #b3b3b3;
  border-radius: 5px 0 0 5px;
}

.model-status {
  height: 28px;
  flex: none;
  display: flex;
  align-items: center;
  padding: 0 2px 0 6px;
  color: #555;
}

.version {
  flex: 1;
}

.mode {
  color: #111;
}

.model-status svg {
  width: 16px;
  height: 16px;
}

.model-status button {
  margin-left: 7px;
}

/* taskbar */
.taskbar {
  height: 49px;
  flex: none;
  display: flex;
  padding: 3px 0 4px 471px;
  background: #f1f1f1;
  border-top: 1px solid #c3c5c5;
  overflow: hidden;
}

.taskbar button {
  width: 45px;
  height: 41px;
  flex: none;
  display: flex;
  flex-direction: column;
  align-items: center;
  padding-top: 9px;
}

.taskbar svg {
  width: 24px;
  height: 24px;
  overflow: visible;
}

.taskbar button::after {
  content: "";
  width: 6px;
  height: 3px;
  margin-top: 4px;
  border-radius: 2px;
  background: #8a8a8a;
}

.taskbar .start::after {
  display: none;
}

.taskbar .edge {
  background: #f3b9b5;
  border-radius: 4px;
}

.taskbar .edge::after {
  background: #c42b1c;
}

.en text {
  font-size: 10px;
  font-weight: 700;
  text-anchor: middle;
  fill: #111;
}

.office text {
  font-size: 10px;
  font-weight: 700;
  text-anchor: middle;
  fill: #fff;
}
```
